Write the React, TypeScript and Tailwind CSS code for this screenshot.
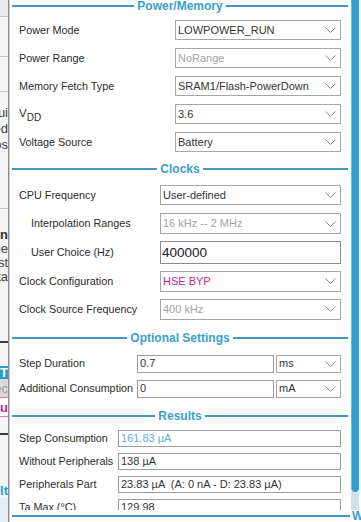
import type { ReactNode } from "react";

const BLUE_TEXT = "text-[#3a9fcb]";
const LINE = "bg-[#4497bd]";

function Chevron() {
  return (
    <svg width="11" height="6" viewBox="0 0 11 6" className="shrink-0">
      <path d="M0.5 0.5 L5.5 5.5 L10.5 0.5" fill="none" stroke="#8c8c8c" strokeWidth="1" />
    </svg>
  );
}

type Tone = "normal" | "disabled" | "pink";

const toneClass: Record<Tone, string> = {
  normal: "text-[#333333]",
  disabled: "text-[#a3a3a3]",
  pink: "text-[#c0278c]",
};

function Select({ value, tone = "normal", className = "" }: { value: string; tone?: Tone; className?: string }) {
  return (
    <div
      className={`flex items-center justify-between bg-white border border-[#a6a6a6] pl-[2px] pr-[4px] text-[11px] leading-none ${toneClass[tone]} ${className}`}
    >
      <span className="whitespace-nowrap">{value}</span>
      <Chevron />
    </div>
  );
}

function SectionHeader({ title }: { title: string }) {
  return (
    <div className="flex items-center h-[12px] px-[2px]">
      <div className={`flex-1 h-[2px] ${LINE}`} />
      <span className={`px-[3px] text-[12px] font-bold leading-none ${BLUE_TEXT}`}>{title}</span>
      <div className={`flex-1 h-[2px] ${LINE}`} />
    </div>
  );
}

function Row({
  label,
  labelW,
  h,
  indent = false,
  children,
}: {
  label: ReactNode;
  labelW: string;
  h: string;
  indent?: boolean;
  children: ReactNode;
}) {
  return (
    <div className={`flex items-center pl-[9px] pr-[9px] ${h}`}>
      <div
        className={`${labelW} shrink-0 whitespace-nowrap text-[10.8px] leading-none text-[#2b2b2b] ${indent ? "pl-[12px]" : ""}`}
      >
        {label}
      </div>
      <div className="flex-1 min-w-0">{children}</div>
    </div>
  );
}

function ResultBox({ value, blue = false }: { value: string; blue?: boolean }) {
  return (
    <div
      className={`h-[17px] flex items-center border border-[#9c9c9c] bg-white px-[2px] text-[11px] leading-none whitespace-pre ${
        blue ? "text-[#5cb1cc]" : "text-[#333333]"
      }`}
    >
      {value}
    </div>
  );
}

function Fragment({ text, className = "", h }: { text: string; className?: string; h: string }) {
  return (
    <div className={`flex items-center justify-end overflow-hidden whitespace-nowrap ${h} ${className}`}>
      <span>{text}</span>
    </div>
  );
}

function BackgroundStrip() {
  return (
    <div className="flex h-full shrink-0">
      <div className="w-[8px] h-full flex flex-col bg-[#f5f5f5] text-[13px] leading-none text-[#444]">
        <div className="h-[16px] bg-[#ebebeb]" />
        <div className="h-[1px] bg-[#c4c4c4]" />
        <div className="h-[39px]" />
        <div className="h-[1px] bg-[#c4c4c4]" />
        <div className="h-[34px]" />
        <div className="h-[1px] bg-[#c4c4c4]" />
        <div className="h-[12px]" />
        <Fragment h="h-[16px]" text="Gui" />
        <Fragment h="h-[16px]" text="ed" />
        <Fragment h="h-[16px]" text="os" />
        <div className="h-[56px]" />
        <div className="h-[1px] bg-[#c4c4c4]" />
        <div className="h-[19px]" />
        <Fragment h="h-[13px]" text="in" className="font-bold text-[#333]" />
        <Fragment h="h-[14px]" text="he" />
        <Fragment h="h-[14px]" text="ist" />
        <Fragment h="h-[14px]" text="ta" />
        <div className="h-[58px]" />
        <div className="h-[2px] bg-[#3c3c3c]" />
        <div className="h-[23px]" />
        <Fragment h="h-[13px]" text="ST" className="bg-[#2d9bd4] text-white font-bold" />
        <Fragment h="h-[18px]" text="ec" className="bg-[#d9d9d9] text-[#9a9a9a]" />
        <div className="h-[1px] bg-[#e079ac]" />
        <Fragment h="h-[18px]" text="Au" className="bg-white text-[#c0278c] font-bold" />
        <div className="h-[1px] bg-[#e079ac]" />
        <div className="h-[16px]" />
        <div className="h-[2px] bg-[#3c3c3c]" />
        <div className="h-[47px]" />
        <Fragment h="h-[16px]" text="ult" className="bg-[#eef5fb] text-[#2d9bd4] font-bold" />
        <div className="flex-1 bg-[#e3eef7]" />
      </div>
      <div className="w-[1px] h-full bg-[#8d8d8d]" />
      <div className="w-[1px] h-full bg-[#c8c8c8]" />
    </div>
  );
}

function Scrollbar() {
  return (
    <div className="w-[11px] shrink-0 flex flex-col pl-[1px] pr-[2px]">
      <div className="h-[492px] rounded-b-[4px] bg-[#2d9bd6] border-l border-[#6bb8e2]" />
      <div className="h-[18px] bg-[#d3dfea]" />
    </div>
  );
}

export default function App() {
  return (
    <div className="w-[361px] h-[522px] overflow-hidden flex bg-white font-['Liberation_Sans',Arial,sans-serif]">
      <BackgroundStrip />
      <div className="flex-1 flex flex-col min-w-0">
        <div className="h-[510px] flex overflow-hidden">
          <div className="flex-1 min-w-0 flex flex-col">
            <SectionHeader title="Power/Memory" />
            <div className="mt-[4px]">
              <Row label="Power Mode" labelW="w-[156px]" h="h-[28px]">
                <Select value="LOWPOWER_RUN" className="h-[20px]" />
              </Row>
              <Row label="Power Range" labelW="w-[156px]" h="h-[28px]">
                <Select value="NoRange" tone="disabled" className="h-[20px]" />
              </Row>
              <Row label="Memory Fetch Type" labelW="w-[156px]" h="h-[28px]">
                <Select value="SRAM1/Flash-PowerDown" className="h-[20px]" />
              </Row>
              <Row
                label={
                  <span className="text-[11.5px]">
                    V<span className="relative top-[4px] text-[10px]">DD</span>
                  </span>
                }
                labelW="w-[156px]"
                h="h-[28px]"
              >
                <Select value="3.6" className="h-[20px]" />
              </Row>
              <Row label="Voltage Source" labelW="w-[156px]" h="h-[28px]">
                <Select value="Battery" className="h-[20px]" />
              </Row>
            </div>

            <div className="mt-[7px]">
              <SectionHeader title="Clocks" />
            </div>
            <div className="mt-[6px]">
              <Row label="CPU Frequency" labelW="w-[141px]" h="h-[28px]">
                <Select value="User-defined" className="h-[20px]" />
              </Row>
              <Row label="Interpolation Ranges" labelW="w-[141px]" h="h-[29px]" indent>
                <Select value="16 kHz -- 2 MHz" tone="disabled" className="h-[21px]" />
              </Row>
              <Row label="User Choice (Hz)" labelW="w-[141px]" h="h-[29px]" indent>
                <div className="h-[23px] flex items-center border border-[#8a8a8a] bg-white px-[1px] text-[13.5px] leading-none text-[#222]">
                  400000
                </div>
              </Row>
              <Row label="Clock Configuration" labelW="w-[141px]" h="h-[28px]">
                <Select value="HSE BYP" tone="pink" className="h-[21px]" />
              </Row>
              <Row label="Clock Source Frequency" labelW="w-[141px]" h="h-[28px]">
                <Select value="400 kHz" tone="disabled" className="h-[21px]" />
              </Row>
            </div>

            <div className="mt-[9px]">
              <SectionHeader title="Optional Settings" />
            </div>
            <div className="mt-[7px]">
              <Row label="Step Duration" labelW="w-[118px]" h="h-[25px]">
                <div className="flex gap-[2px]">
                  <div className="flex-1 h-[18px] flex items-center border border-[#9c9c9c] bg-white px-[2px] text-[11px] leading-none text-[#333]">
                    0.7
                  </div>
                  <Select value="ms" className="w-[65px] h-[18px]" />
                </div>
              </Row>
              <Row label="Additional Consumption" labelW="w-[118px]" h="h-[25px]">
                <div className="flex gap-[2px]">
                  <div className="flex-1 h-[18px] flex items-center border border-[#9c9c9c] bg-white px-[2px] text-[11px] leading-none text-[#333]">
                    0
                  </div>
                  <Select value="mA" className="w-[65px] h-[18px]" />
                </div>
              </Row>
            </div>

            <div className="mt-[9px]">
              <SectionHeader title="Results" />
            </div>
            <div className="mt-[5px]">
              <Row label="Step Consumption" labelW="w-[99px]" h="h-[23px]">
                <ResultBox value="161.83 µA" blue />
              </Row>
              <Row label="Without Peripherals" labelW="w-[99px]" h="h-[23px]">
                <ResultBox value="138 µA" />
              </Row>
              <Row label="Peripherals Part" labelW="w-[99px]" h="h-[23px]">
                <ResultBox value="23.83 µA  (A: 0 nA - D: 23.83 µA)" />
              </Row>
              <Row label="Ta Max (°C)" labelW="w-[99px]" h="h-[23px]">
                <ResultBox value="129.98" />
              </Row>
            </div>
          </div>
          <Scrollbar />
        </div>
        <div className="h-[12px] flex items-center pl-[2px]">
          <div className={`flex-1 h-[2px] ${LINE}`} />
          <span className={`w-[11px] pl-[2px] text-[12px] font-bold leading-none overflow-hidden ${BLUE_TEXT}`}>W</span>
        </div>
      </div>
    </div>
  );
}
